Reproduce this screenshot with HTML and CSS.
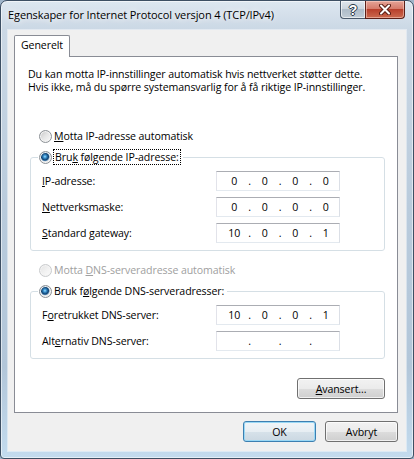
FILE: index.html
```html
<!DOCTYPE html>
<html lang="no">
<head>
    <meta charset="UTF-8">
    <title>Egenskaper for Internet Protocol versjon 4 (TCP/IPv4)</title>
    <link rel="stylesheet" href="styles.css">
</head>
<body>

<div class="window">
    <div class="titlebar">
        <span class="title">Egenskaper for Internet Protocol versjon 4 (TCP/IPv4)</span>
        <div class="caption-buttons">
            <button class="cap help">?</button>
            <button class="cap close">
                <svg width="12" height="11" viewBox="0 0 12 11">
                    <path d="M2 1.5 L10 9.5 M10 1.5 L2 9.5" stroke="#5a1d14" stroke-width="4" stroke-linecap="round"/>
                    <path d="M2 1.5 L10 9.5 M10 1.5 L2 9.5" stroke="#fff" stroke-width="2" stroke-linecap="round"/>
                </svg>
            </button>
        </div>
    </div>

    <div class="client">
        <div class="tabs">
            <span class="tab active">Generelt</span>
        </div>

        <div class="panel">
            <p class="intro">Du kan motta IP-innstillinger automatisk hvis nettverket støtter dette.<br>Hvis ikke, må du spørre systemansvarlig for å få riktige IP-innstillinger.</p>

            <label class="radio-row"><span class="radio"></span><span><u>M</u>otta IP-adresse automatisk</span></label>

            <fieldset class="group">
                <legend><label class="radio-row"><span class="radio checked"></span><span class="focus">Bru<u>k</u> følgende IP-adresse:</span></label></legend>
                <div class="field">
                    <span><u>I</u>P-adresse:</span>
                    <div class="ipbox"><span>0</span><i>.</i><span>0</span><i>.</i><span>0</span><i>.</i><span>0</span></div>
                </div>
                <div class="field">
                    <span><u>N</u>ettverksmaske:</span>
                    <div class="ipbox"><span>0</span><i>.</i><span>0</span><i>.</i><span>0</span><i>.</i><span>0</span></div>
                </div>
                <div class="field">
                    <span><u>S</u>tandard gateway:</span>
                    <div class="ipbox"><span>10</span><i>.</i><span>0</span><i>.</i><span>0</span><i>.</i><span>1</span></div>
                </div>
            </fieldset>

            <label class="radio-row disabled"><span class="radio"></span><span>Motta <u>D</u>NS-serveradresse automatisk</span></label>

            <fieldset class="group">
                <legend><label class="radio-row"><span class="radio checked"></span><span>Bruk f<u>ø</u>lgende DNS-serveradresser:</span></label></legend>
                <div class="field">
                    <span>F<u>o</u>retrukket DNS-server:</span>
                    <div class="ipbox"><span>10</span><i>.</i><span>0</span><i>.</i><span>0</span><i>.</i><span>1</span></div>
                </div>
                <div class="field">
                    <span>Alt<u>e</u>rnativ DNS-server:</span>
                    <div class="ipbox"><span></span><i>.</i><span></span><i>.</i><span></span><i>.</i><span></span></div>
                </div>
            </fieldset>

            <div class="panel-actions">
                <button class="btn wide"><u>A</u>vansert...</button>
            </div>
        </div>

        <div class="dialog-actions">
            <button class="btn default">OK</button>
            <button class="btn">Avbryt</button>
        </div>
    </div>
</div>

</body>
</html>
```

FILE: styles.css
```css
body {
    margin: 0;
    font-family: "Open Sans", "Noto Sans", sans-serif;
    font-size: 10.6px;
    letter-spacing: -0.1px;
    color: #000;
    background: #9fb5ca;
}
.window {
    width: 414px;
    height: 459px;
    box-sizing: border-box;
    border: 1px solid #3d4f63;
    border-radius: 7px 7px 4px 4px;
    background: linear-gradient(180deg, #dde7f0 0, #cbd8e5 28px, #b9cbdc 45%, #b2c6d9 80%, #c3dbee 100%);
    box-shadow: inset 0 0 0 1px rgba(255, 255, 255, 0.55);
    display: flex;
    flex-direction: column;
    overflow: hidden;
}
.titlebar {
    height: 29px;
    display: flex;
    align-items: flex-start;
    padding-left: 7px;
}
.title {
    font-size: 11px;
    line-height: 28px;
    text-shadow: 0 0 6px #fff, 0 0 10px rgba(255, 255, 255, 0.8);
    white-space: nowrap;
}
.caption-buttons {
    margin-left: auto;
    margin-right: 8px;
    display: flex;
}
.cap {
    height: 18px;
    border: 1px solid #4a5a6c;
    border-top: none;
    padding: 0;
    display: flex;
    align-items: center;
    justify-content: center;
    font-family: "Liberation Sans", Arial, sans-serif;
}
.help {
    width: 25px;
    border-right: none;
    border-radius: 0 0 0 4px;
    background: linear-gradient(180deg, #dfe6ed 0, #c9d3dc 50%, #aebcc9 50%, #c0ccd6 100%);
    box-shadow: inset 0 0 0 1px rgba(255, 255, 255, 0.6);
    color: #fff;
    font-size: 14px;
    font-weight: bold;
    text-shadow: 0 0 1px #2d3a48, 1px 0 0 #2d3a48, -1px 0 0 #2d3a48, 0 1px 0 #2d3a48, 0 -1px 0 #2d3a48;
}
.close {
    width: 40px;
    border-radius: 0 0 4px 0;
    border-color: #5c2018;
    background: linear-gradient(180deg, #e5a497 0, #d47766 50%, #b8402c 50%, #cb6a4f 100%);
    box-shadow: inset 0 0 0 1px rgba(255, 220, 210, 0.5);
}
.client {
    flex: 1;
    margin: 0 7px 7px;
    background: #f0f0f0;
    padding: 5px 8px 0 6px;
    box-shadow: 0 0 0 1px rgba(255, 255, 255, 0.45);
}
.tabs {
    display: flex;
    height: 21px;
}
.tab {
    position: relative;
    z-index: 1;
    height: 22px;
    box-sizing: border-box;
    border: 1px solid #898c95;
    border-bottom: none;
    border-radius: 2px 2px 0 0;
    background: #fff;
    padding: 0 6px;
    line-height: 19px;
}
.panel {
    border: 1px solid #898c95;
    background: #fff;
    padding: 11px 12px 13px 13px;
}
.intro {
    margin: 0;
    line-height: 13px;
    white-space: nowrap;
}
.radio-row {
    display: flex;
    align-items: center;
    height: 20px;
    white-space: nowrap;
}
.panel > .radio-row {
    padding-left: 11px;
    margin-top: 32px;
}
.panel > .radio-row.disabled {
    margin-top: 9px;
    color: #a0a0a0;
}
.radio {
    width: 13px;
    height: 13px;
    box-sizing: border-box;
    border-radius: 50%;
    border: 1px solid #8c9196;
    background: linear-gradient(135deg, #c4c4c4 0, #e4e4e4 45%, #fbfbfb 100%);
    box-shadow: inset 0 0 0 1px #f4f4f4;
    margin-right: 2px;
    flex: none;
}
.radio.checked {
    background: radial-gradient(circle at 45% 42%, #9fe0ff 0, #3a92cf 1.5px, #0f3e6c 3.5px, #5f8fb8 4.2px, #e9e9e9 5px, #f6f6f6 100%);
}
.disabled .radio {
    border-color: #c9cbcd;
    background: linear-gradient(135deg, #e2e2e2 0, #f1f1f1 50%, #fbfbfb 100%);
}
.focus {
    outline: 1px dotted #000;
    outline-offset: 0;
    padding: 0 1px;
}
.group {
    margin: 1px 0 0 2px;
    padding: 4px 44px 7px 11px;
    border: 1px solid #d5dfe5;
    border-radius: 3px;
    min-width: 0;
}
.group legend {
    margin-left: -4px;
    padding: 0 3px 0 1px;
}
.field {
    display: flex;
    align-items: center;
    justify-content: space-between;
    height: 20px;
}
.field + .field {
    margin-top: 6px;
}
.ipbox {
    width: 124px;
    height: 20px;
    box-sizing: border-box;
    border: 1px solid #e3e9ef;
    border-top-color: #abadb3;
    border-left-color: #e2e3ea;
    border-right-color: #dbdfe6;
    background: #fff;
    display: grid;
    grid-template-columns: 1fr 6px 1fr 6px 1fr 6px 1fr;
    align-items: center;
    text-align: center;
    padding: 0 1px 0 5px;
}
.ipbox i {
    font-style: normal;
}
.panel-actions {
    display: flex;
    justify-content: flex-end;
    margin-top: 19px;
}
.dialog-actions {
    display: flex;
    justify-content: flex-end;
    gap: 9px;
    margin-top: 8px;
}
.btn {
    width: 73px;
    height: 21px;
    border: 1px solid #707070;
    border-radius: 3px;
    background: linear-gradient(180deg, #f2f2f2 0, #ebebeb 50%, #dddddd 50%, #cfcfcf 100%);
    box-shadow: inset 0 0 0 1px rgba(255, 255, 255, 0.7);
    font-family: inherit;
    font-size: 10.6px;
    letter-spacing: -0.1px;
    color: #000;
    padding: 0;
}
.btn.wide {
    width: 88px;
}
.btn.default {
    border-color: #3c7fb1;
    background: linear-gradient(180deg, #f1f5f8 0, #e7eef3 50%, #d7e2ea 50%, #cbd8e2 100%);
    box-shadow: inset 0 0 0 1px #9ad8f5;
}
```
